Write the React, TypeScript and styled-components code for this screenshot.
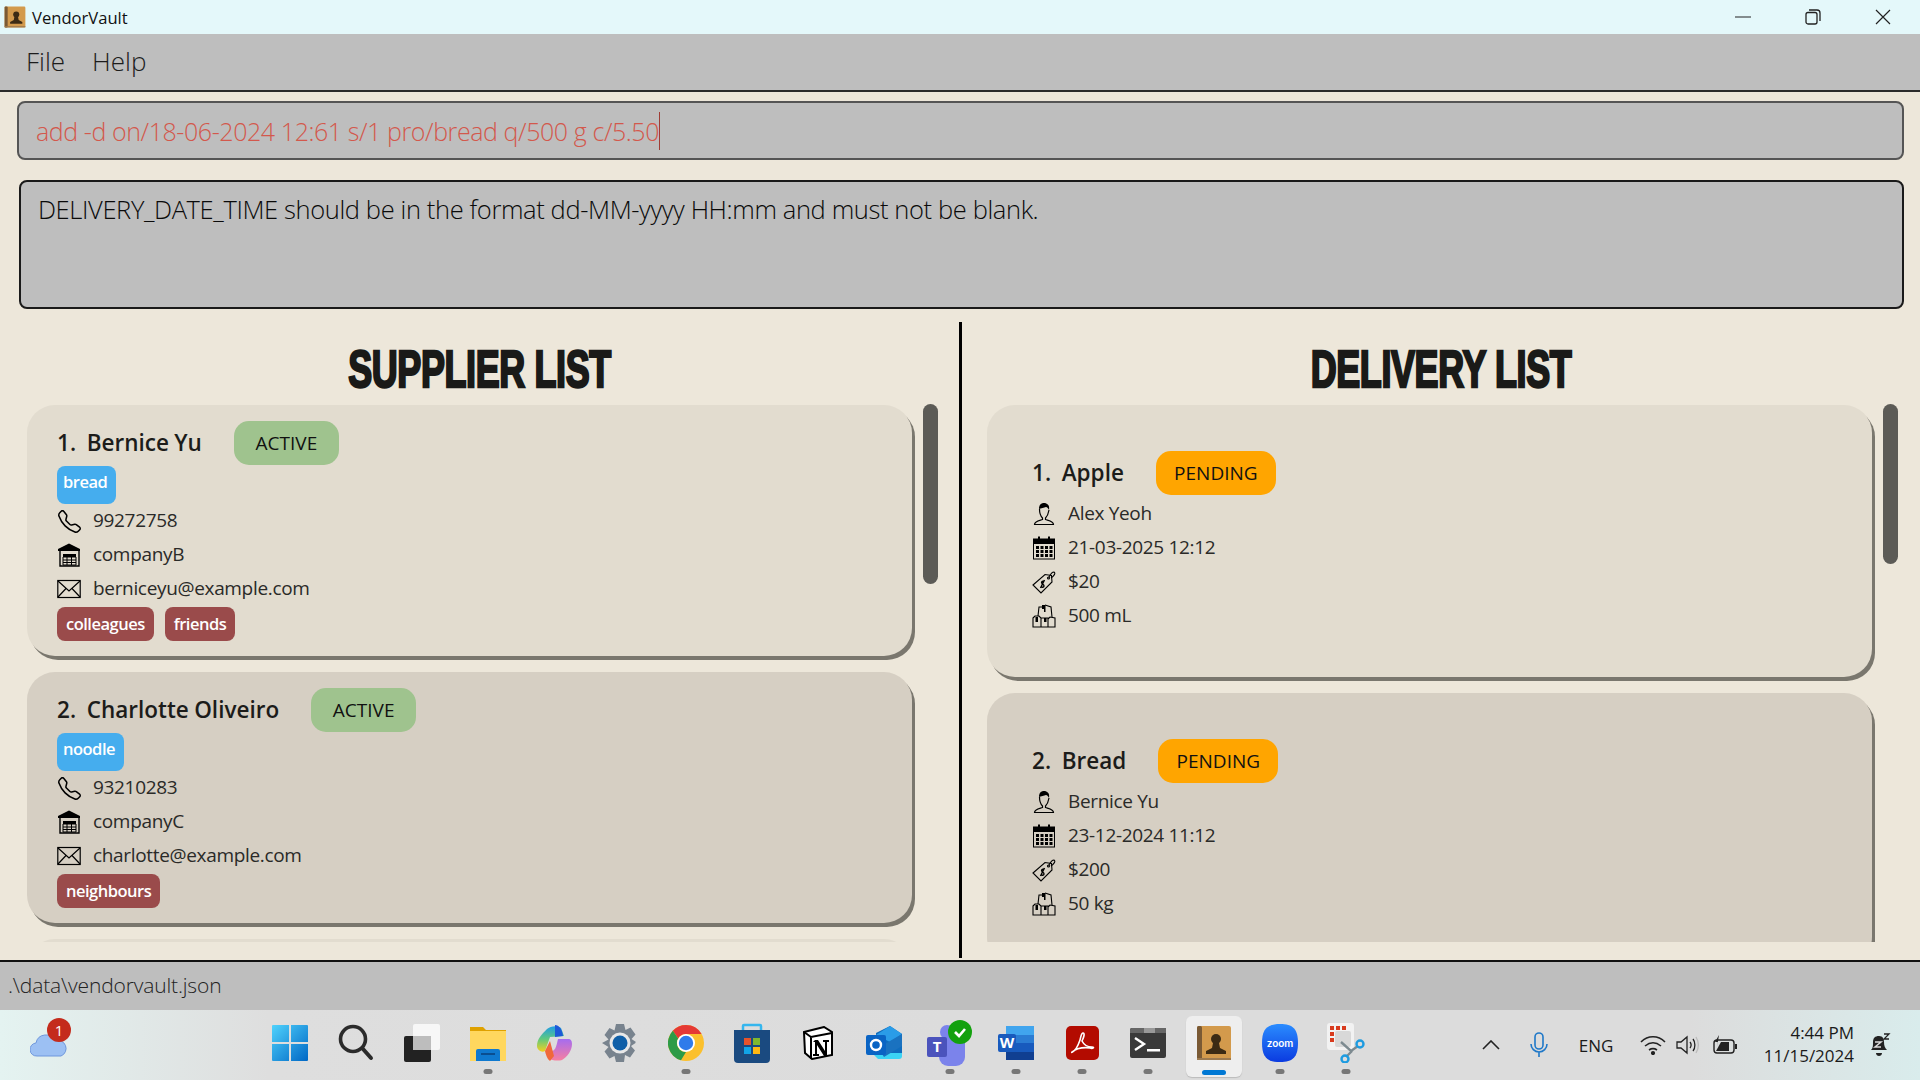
import React from "react";
import styled, { createGlobalStyle } from "styled-components";
import { BsTelephone } from "react-icons/bs";

const GlobalStyle = createGlobalStyle`
  html, body { margin: 0; padding: 0; }
  body { font-family: "Open Sans", "Noto Sans", sans-serif; background: #ede7da; overflow: hidden; }
  * { box-sizing: border-box; }
  svg { flex-shrink: 0; }
`;

const Page = styled.div`
  width: 1920px;
  height: 1080px;
  display: flex;
  flex-direction: column;
  overflow: hidden;
  background: #ede7da;
  color: #1c1c1a;
`;

const TitleBar = styled.div`
  height: 34px;
  flex: none;
  display: flex;
  align-items: center;
  background: #e4f8fa;
  padding-left: 4px;
  font-size: 16.6px;
  color: #111;
`;

const AppName = styled.span`
  margin-left: 6px;
  flex: 1;
`;

const WindowButton = styled.div`
  width: 70px;
  height: 34px;
  display: flex;
  align-items: center;
  justify-content: center;
  &:last-child { margin-right: 2px; }
`;

const MenuBar = styled.div`
  height: 58px;
  flex: none;
  display: flex;
  align-items: center;
  gap: 27px;
  padding: 0 0 2px 26px;
  background: #bebebe;
  border-bottom: 2px solid #2b2b2b;
  font-size: 26px;
  font-weight: 300;
  color: #1c1c1c;
`;

const CommandBox = styled.div`
  height: 59px;
  flex: none;
  margin: 9px 16px 0 17px;
  padding-left: 17px;
  display: flex;
  align-items: center;
  background: #bebebe;
  border: 2px solid #555;
  border-radius: 8px;
  font-size: 25px;
  font-weight: 300;
  letter-spacing: -0.42px;
  color: #d3584c;
  white-space: pre;
`;

const Caret = styled.span`
  width: 1px;
  height: 38px;
  background: #a03c34;
`;

const ResultBox = styled.div`
  height: 129px;
  flex: none;
  margin: 20px 16px 0 19px;
  padding: 10px 17px;
  background: #bebebe;
  border: 2px solid #1a1a1a;
  border-radius: 8px;
  font-size: 25.5px;
  font-weight: 300;
  letter-spacing: -0.38px;
  color: #0a0a0a;
`;

const Panels = styled.div`
  height: 636px;
  flex: none;
  margin-top: 13px;
  display: flex;
`;

const Panel = styled.section<{ $left?: boolean }>`
  width: ${({ $left }) => ($left ? "959px" : "958px")};
  flex: none;
  position: relative;
  padding-left: ${({ $left }) => ($left ? "27px" : "25px")};
`;

const Divider = styled.div`
  width: 3px;
  flex: none;
  background: #000;
`;

const PanelTitle = styled.h2<{ $inset: number }>`
  height: 81px;
  margin: 0 0 0 -${({ $inset }) => $inset}px;
  display: flex;
  align-items: center;
  justify-content: center;
  font-family: "Liberation Sans", sans-serif;
  font-size: 52px;
  font-weight: 700;
  -webkit-text-stroke: 2.5px #1a1a18;
  color: #1a1a18;
  letter-spacing: -0.5px;
  padding-top: 12px;
  transform: scaleX(0.69);
`;

const List = styled.div`
  height: 539px;
  padding-top: 2px;
  overflow: hidden;
  display: flex;
  flex-direction: column;
  gap: 16px;
`;

const Card = styled.article<{ $odd?: boolean; $delivery?: boolean; $height: number }>`
  width: 885px;
  height: ${({ $height }) => $height}px;
  flex: none;
  padding: ${({ $delivery }) => ($delivery ? "46px 0 0 45px" : "16px 0 0 30px")};
  background: ${({ $odd }) => ($odd ? "#e2dccf" : "#d6cfc3")};
  border-radius: 28px;
  box-shadow: 3px 4px 0 #7a776e;
`;

const NameRow = styled.div<{ $delivery?: boolean }>`
  height: 44px;
  display: flex;
  align-items: center;
  gap: 32px;
  margin-bottom: ${({ $delivery }) => ($delivery ? "2px" : "1px")};
`;

const Name = styled.span`
  font-size: 22.5px;
  font-weight: 600;
  word-spacing: -0.5px;
  color: #1c1c1a;
  white-space: pre;
  padding-bottom: 2px;
`;

const StatusPill = styled.span<{ $colour: string; $width: number }>`
  width: ${({ $width }) => $width}px;
  height: 44px;
  display: flex;
  align-items: center;
  justify-content: center;
  background: ${({ $colour }) => $colour};
  border-radius: 15px;
  font-size: 19px;
  color: #111;
`;

const TagRow = styled.div`
  display: flex;
  gap: 11px;
`;

const ProductTag = styled.span`
  height: 38px;
  padding: 2px 9px 0 6px;
  background: #45adee;
  border-radius: 8px;
  color: #fff;
  font-size: 16.5px;
  font-weight: 600;
  letter-spacing: -0.5px;
  line-height: 28px;
`;

const PersonTag = styled.span`
  height: 34px;
  padding: 0 9px;
  margin-top: 1px;
  background: #9a4b4b;
  border-radius: 8px;
  color: #fff;
  font-size: 16.5px;
  font-weight: 600;
  letter-spacing: -0.5px;
  line-height: 33px;
`;

const InfoRow = styled.div`
  height: 34px;
  display: flex;
  align-items: center;
  gap: 12px;
  font-size: 19px;
  letter-spacing: -0.33px;
  color: #2a2a28;
  padding-bottom: 2px;
`;

const RowIcon = styled.span`
  width: 24px;
  height: 24px;
  flex: none;
  display: flex;
  align-items: center;
  justify-content: center;
  color: #000;
  margin-top: 2px;
`;

const ScrollThumb = styled.div<{ $left: number; $height: number }>`
  position: absolute;
  top: 82px;
  left: ${({ $left }) => $left}px;
  width: 15px;
  height: ${({ $height }) => $height}px;
  border-radius: 8px;
  background: #5c5b56;
`;

const StatusBar = styled.div`
  height: 50px;
  flex: none;
  margin-top: 2px;
  padding: 0 0 3px 8px;
  display: flex;
  align-items: center;
  background: #bebebe;
  border-top: 2px solid #111;
  font-size: 21px;
  letter-spacing: -0.15px;
  font-weight: 300;
  color: #222;
`;

const Taskbar = styled.footer`
  height: 70px;
  flex: none;
  position: relative;
  display: flex;
  align-items: center;
  background: linear-gradient(90deg, #e4f3f1 0%, #dedede 14%, #dcdcdc 50%, #dcdcdc 88%, #d9ecec 100%);
  color: #1a1a1a;
`;

const Weather = styled.div`
  width: 257px;
  flex: none;
  position: relative;
  height: 70px;
  padding: 16px 0 0 30px;
`;

const Badge = styled.span`
  position: absolute;
  left: 47px;
  top: 8px;
  width: 24px;
  height: 24px;
  border-radius: 50%;
  background: #c42b1c;
  color: #fff;
  font-size: 15px;
  text-align: center;
  line-height: 24px;
`;

const TaskItem = styled.div<{ $running?: boolean; $active?: boolean }>`
  width: 66px;
  height: 70px;
  flex: none;
  position: relative;
  display: flex;
  align-items: center;
  justify-content: center;
  padding-bottom: 4px;
  &::before {
    content: "";
    display: ${({ $active }) => ($active ? "block" : "none")};
    position: absolute;
    left: 5px;
    right: 5px;
    top: 6px;
    bottom: 3px;
    background: #eeeeee;
    border-radius: 6px;
    box-shadow: 0 1px 1px #bbb;
  }
  &::after {
    content: "";
    display: ${({ $running, $active }) => ($running || $active ? "block" : "none")};
    position: absolute;
    left: 50%;
    transform: translateX(-50%);
    bottom: ${({ $active }) => ($active ? "5px" : "6px")};
    width: ${({ $active }) => ($active ? "24px" : "9px")};
    height: 5px;
    border-radius: 3px;
    background: ${({ $active }) => ($active ? "#0078d4" : "#777")};
  }
  svg { position: relative; }
`;

const Tray = styled.div`
  position: absolute;
  right: 0;
  top: 0;
  height: 70px;
  width: 460px;
  display: flex;
  align-items: center;
`;

const TrayIcon = styled.span<{ $width: number }>`
  width: ${({ $width }) => $width}px;
  flex: none;
  display: flex;
  align-items: center;
  justify-content: center;
  font-size: 17px;
`;

const Clock = styled.div`
  width: 110px;
  flex: none;
  text-align: right;
  font-size: 17px;
  line-height: 23px;
  white-space: nowrap;
  padding-bottom: 2px;
`;

const Telephone = () => <BsTelephone size={23} />;

const Warehouse = () => (
  <svg width="24" height="24" viewBox="0 0 24 24">
    <path d="M12 0.5L1 6v2h22V6z" fill="#000" />
    <path d="M3 8v15h19V8" fill="none" stroke="#000" strokeWidth="1.4" />
    <path d="M6 11h13v3H6z" fill="#000" />
    <path d="M6 14h13v8H6z" fill="none" stroke="#000" />
    <path d="M6 17h13M6 19.5h13M10 14v8M14.5 14v8" stroke="#000" strokeWidth="1" />
  </svg>
);

const Envelope = () => (
  <svg width="24" height="24" viewBox="0 0 24 24" fill="none" stroke="#000" strokeWidth="1.2">
    <rect x="0.8" y="3.5" width="22.4" height="17" />
    <path d="M1 4l11 10L23 4M1 20l8-8.5M23 20l-8-8.5" />
  </svg>
);

const Person = () => (
  <svg width="24" height="24" viewBox="0 0 24 24">
    <path d="M7 7c0-4 2-6 5-6s6 2 5 7c-1-2-2-3-3-3-2 1-5 1-7 2z" fill="#000" />
    <path d="M7.5 7c0 4 1 7 3 9v1.5c-3 1-8 1.500-8 5h19c0-3.500-5-4-8-5V16c2-2 3-5 3.500-8" fill="none" stroke="#000" strokeWidth="1.2" />
  </svg>
);

const Calendar = () => (
  <svg width="24" height="24" viewBox="0 0 24 24">
    <path d="M1 3h22v5H1z" fill="#000" />
    <path d="M6 0.500h2v4H6zM16 0.500h2v4h-2z" fill="#000" />
    <rect x="1.500" y="3" width="21" height="20" fill="none" stroke="#000" />
    {[10, 14, 18].map(y =>
      [4, 8.5, 13, 17.5].map(x => <rect key={`${x}-${y}`} x={x} y={y} width="3" height="3" fill="#000" />)
    )}
  </svg>
);

const PriceTag = () => (
  <svg width="24" height="24" viewBox="0 0 24 24" fill="none" stroke="#000" strokeWidth="1.1">
    <path d="M1 15L13 4.500l6.500 1 .5 6.500L9 23z" />
    <circle cx="16.500" cy="8" r="1" />
    <path d="M17 7c1-2 3-5 5-5 2 1 0 4-3 6" />
    <path d="M12 11.500c-2-1-3 1-2 2s2 1 2 2.500-2 1.500-3 .5M12.500 10l-4 8" strokeWidth="1.400" />
  </svg>
);

const Boxes = () => (
  <svg width="24" height="24" viewBox="0 0 24 24" fill="none" stroke="#000" strokeWidth="1.1">
    <path d="M6 12l1-9h4M13 1l6 2 1 10" />
    <path d="M1 14l2-2h4l2 2v9H1zM9 14h7v9H9zM16 15l2-2 5 1v9h-7" />
    <path d="M10 1h3.500v7H12v-3h-2zM3.500 13H6v5H3.500zM12 14h2.500v4H12z" fill="#000" stroke="none" />
  </svg>
);

const VaultIcon = ({ size }: { size: number }) => (
  <svg width={size} height={size} viewBox="0 0 36 36">
    <rect x="1" y="1" width="34" height="34" rx="2" fill="#d39a4c" />
    <rect x="1" y="1" width="5" height="34" rx="1.500" fill="#7a5a35" />
    <rect x="1" y="33" width="34" height="2" fill="#9c7a50" />
    <circle cx="20" cy="14" r="5" fill="#3c2b14" />
    <path d="M17 18h6l1 5 6 3v3H10v-3l6-3z" fill="#3c2b14" />
  </svg>
);

const StartIcon = () => (
  <svg width="36" height="36" viewBox="0 0 36 36">
    <defs>
      <linearGradient id="st" x1="0" y1="0" x2="1" y2="1">
        <stop offset="0" stopColor="#4fd2fc" />
        <stop offset="1" stopColor="#0067c5" />
      </linearGradient>
    </defs>
    <path d="M0 1a1 1 0 0 1 1-1h16v17H0zM19 0h16a1 1 0 0 1 1 1v16H19zM0 19h17v17H1a1 1 0 0 1-1-1zM19 19h17v16a1 1 0 0 1-1 1H19z" fill="url(#st)" />
  </svg>
);

const SearchIcon = () => (
  <svg width="36" height="38" viewBox="0 0 36 38" fill="none" stroke="#2b2b2b" strokeLinecap="round">
    <circle cx="15" cy="15" r="12.500" strokeWidth="3.600" />
    <path d="M25 25l8 9" strokeWidth="4" />
  </svg>
);

const TaskViewIcon = () => (
  <svg width="36" height="38" viewBox="0 0 36 38">
    <rect x="0" y="12" width="27" height="26" rx="2" fill="#222" />
    <rect x="9" y="0" width="27" height="26" rx="2" fill="#fafafa" opacity="0.9" />
    <rect x="9" y="12" width="18" height="14" fill="#bdbdbd" />
  </svg>
);

const FolderIcon = () => (
  <svg width="36" height="36" viewBox="0 0 36 36">
    <path d="M0 2h13l3 3h20v3H0z" fill="#dfa100" />
    <path d="M0 6h36v30H0z" fill="#ffd75e" />
    <path d="M6 26a2 2 0 0 1 2-2h20a2 2 0 0 1 2 2v10H6z" fill="#0f79cf" />
    <rect x="11" y="28" width="14" height="2" fill="#0a4e90" />
  </svg>
);

const CopilotIcon = () => (
  <svg width="36" height="36" viewBox="0 0 36 36">
    <defs>
      <linearGradient id="cp1" x1="0" y1="0" x2="0" y2="1">
        <stop offset="0" stopColor="#1f9ce6" />
        <stop offset="0.5" stopColor="#5fc97e" />
        <stop offset="1" stopColor="#f3d01f" />
      </linearGradient>
      <linearGradient id="cp2" x1="0" y1="0" x2="0" y2="1">
        <stop offset="0" stopColor="#a56cf0" />
        <stop offset="1" stopColor="#f77fa0" />
      </linearGradient>
    </defs>
    <path d="M11 4c3-3 11-4 14-1l3 8-14 1-5 14c-3 2-8-1-8-5 0-7 5-12 10-17z" fill="url(#cp1)" />
    <path d="M22 14h10c3 0 4 2 4 5 0 7-5 13-10 16-3 1-10 1-14-2l3-7c4 0 5-3 7-12z" fill="url(#cp2)" />
    <path d="M9 26l5-10 4 15 -4 5c-3-2-4-6-5-10z" fill="#f0683a" />
    <path d="M19 0c4 0 7 4 8 11l-8 1z" fill="#1d59d8" />
  </svg>
);

const SettingsIcon = () => (
  <svg width="36" height="38" viewBox="0 0 36 38">
    <path d="M14 0h8l1.500 6 5-2.500 5 7-4 4.500 4.500 3-.5 0 0 1-4.500 3 4 4.500-5 7-5-2.500L22 38h-8l-1.500-6-5 2.500-5-7 4-4.500L0 19l6.500-3.500-4-4.500 5-7 5 2.500z" fill="#78838e" />
    <circle cx="18" cy="19" r="10.500" fill="#e8e8e8" />
    <circle cx="18" cy="19" r="7.500" fill="#0f5fa8" />
  </svg>
);

const ChromeIcon = () => (
  <svg width="36" height="40" viewBox="0 0 36 36">
    <circle cx="18" cy="18" r="18" fill="#fbc02d" />
    <path d="M18 0A18 18 0 0 1 33.600 9H18A9 9 0 0 0 10.200 13.500L4.800 5.700A18 18 0 0 1 18 0Z" fill="#e53935" />
    <path d="M4.800 5.700L10.200 13.500A9 9 0 0 0 18 27L13 35.300A18 18 0 0 1 4.800 5.700Z" fill="#2e9b47" />
    <circle cx="18" cy="18" r="9" fill="#fff" />
    <circle cx="18" cy="18" r="7.200" fill="#2f7bea" />
  </svg>
);

const StoreIcon = () => (
  <svg width="36" height="40" viewBox="0 0 36 40">
    <path d="M9 8V3a1 1 0 0 1 1-1h16a1 1 0 0 1 1 1v5" fill="none" stroke="#35b6ee" strokeWidth="2.500" />
    <path d="M0 7h36v29a4 4 0 0 1-4 4H4a4 4 0 0 1-4-4z" fill="#1a4a80" />
    <path d="M10 15h7v7h-7z" fill="#e8532b" />
    <path d="M19 15h7v7h-7z" fill="#7fb82e" />
    <path d="M10 24h7v7h-7z" fill="#12a5e8" />
    <path d="M19 24h7v7h-7z" fill="#fdb813" />
  </svg>
);

const NotionIcon = () => (
  <svg width="30" height="34" viewBox="0 0 30 34">
    <path d="M1 6L21 1l8 5v23l-20 4-7-6z" fill="#fff" stroke="#000" strokeWidth="2" />
    <path d="M1 6l7 5 21-4M8 11v22" fill="none" stroke="#000" strokeWidth="2" />
    <path d="M12 14l3 0 7 11v-9h-2v-2h6v2h-2v14h-3l-7-11v9h2v2h-6v-2h2V16h-2z" fill="#000" />
  </svg>
);

const OutlookIcon = () => (
  <svg width="36" height="36" viewBox="0 0 36 36">
    <path d="M10 8l14-7 12 8v20a3 3 0 0 1-3 3H10z" fill="#0f6cbd" />
    <path d="M24 1l12 8-12 8-14-7z" fill="#2a9ce8" />
    <path d="M6 28h30v3a3 3 0 0 1-3 3H12z" fill="#3bd4f5" />
    <path d="M12 23l24-14v12L18 32z" fill="#1a72c0" />
    <rect x="0" y="10" width="20" height="20" rx="2" fill="#0a64c4" />
    <circle cx="10" cy="20" r="5" fill="none" stroke="#fff" strokeWidth="2.400" />
  </svg>
);

const TeamsIcon = () => (
  <svg width="46" height="46" viewBox="0 0 46 46">
    <circle cx="20" cy="12" r="7" fill="#7b83eb" />
    <rect x="12" y="14" width="26" height="32" rx="9" fill="#7b83eb" />
    <rect x="0" y="17" width="20" height="20" rx="2" fill="#4b53bc" />
    <text x="10" y="32" textAnchor="middle" fontSize="15" fontWeight="700" fill="#fff" fontFamily="Open Sans">T</text>
    <circle cx="33" cy="12" r="12" fill="#13a10e" />
    <path d="M28 12l4 4 6-7" fill="none" stroke="#fff" strokeWidth="2.600" />
  </svg>
);

const WordIcon = () => (
  <svg width="36" height="36" viewBox="0 0 36 36">
    <rect x="8" y="1" width="28" height="34" rx="2" fill="#2b7cd3" />
    <rect x="8" y="1" width="28" height="9" fill="#41a5ee" />
    <rect x="8" y="18" width="28" height="9" fill="#185abd" />
    <rect x="8" y="27" width="28" height="8" fill="#103f91" />
    <rect x="0" y="9" width="18" height="18" rx="2" fill="#185abd" />
    <text x="9" y="23" textAnchor="middle" fontSize="15" fontWeight="700" fill="#fff" fontFamily="Open Sans">W</text>
  </svg>
);

const AcrobatIcon = () => (
  <svg width="33" height="34" viewBox="0 0 33 34">
    <rect x="0" y="0" width="33" height="34" rx="5" fill="#b30b00" />
    <path d="M6 26c3-1 6-6 8-12 1-3 1-7 3-7s1 4-1 8c2 4 5 6 10 6 3 0 1 2-2 1-5-1-12 0-15 2-2 2-4 3-3 2z" fill="none" stroke="#fff" strokeWidth="1.600" />
  </svg>
);

const TerminalIcon = () => (
  <svg width="36" height="30" viewBox="0 0 36 30">
    <rect x="0" y="0" width="36" height="30" rx="2" fill="#3a3a3a" />
    <path d="M0 2a2 2 0 0 1 2-2h12v5H0z" fill="#666" />
    <rect x="14" y="0" width="11" height="5" fill="#999" />
    <rect x="25" y="0" width="11" height="5" fill="#666" />
    <path d="M5 10l9 6-9 6" fill="none" stroke="#fff" strokeWidth="2.400" />
    <rect x="17" y="21" width="13" height="2.500" fill="#fff" />
  </svg>
);

const ZoomIcon = () => (
  <svg width="36" height="38" viewBox="0 0 36 38">
    <defs>
      <linearGradient id="zm" x1="0" y1="0" x2="0" y2="1">
        <stop offset="0" stopColor="#2a8cff" />
        <stop offset="1" stopColor="#0b3be0" />
      </linearGradient>
    </defs>
    <path d="M18 0c13 0 18 5 18 19s-5 19-18 19S0 33 0 19 5 0 18 0z" fill="url(#zm)" />
    <text x="18" y="23" textAnchor="middle" fontSize="10" fontWeight="600" fill="#fff" fontFamily="Inter">zoom</text>
  </svg>
);

const SnipIcon = () => (
  <svg width="38" height="40" viewBox="0 0 38 40">
    <rect x="0" y="0" width="27" height="27" rx="3" fill="#f2f2f2" />
    <path d="M3 3h4v4H3zM9 3h4v4H9zM15 3h4v4h-4zM3 9h4v4H3zM3 15h4v4H3z" fill="#d83b1e" />
    <rect x="8" y="8" width="16" height="16" rx="2" fill="#d8d8d8" />
    <path d="M14 19l10 9 7-5M25 28l-6 6" fill="none" stroke="#7d8a90" strokeWidth="2.400" />
    <circle cx="33" cy="21" r="3.500" fill="none" stroke="#1d9be0" strokeWidth="2.400" />
    <circle cx="18" cy="36" r="3.500" fill="none" stroke="#1d9be0" strokeWidth="2.400" />
  </svg>
);

const CloudIcon = () => (
  <svg width="38" height="32" viewBox="0 0 38 32">
    <circle cx="28" cy="10" r="7" fill="#e8861a" />
    <path d="M7 30a6.500 6.500 0 0 1-1-13 10 10 0 0 1 19-2 8 8 0 0 1 6 15z" fill="#9cc0f3" stroke="#6f97dc" strokeWidth="1" />
  </svg>
);

const suppliers = [
  { no: 1, name: "Bernice Yu", status: "ACTIVE", product: "bread", phone: "99272758", company: "companyB", email: "berniceyu@example.com", tags: ["colleagues", "friends"] },
  { no: 2, name: "Charlotte Oliveiro", status: "ACTIVE", product: "noodle", phone: "93210283", company: "companyC", email: "charlotte@example.com", tags: ["neighbours"] },
];

const deliveries = [
  { no: 1, product: "Apple", person: "Alex Yeoh", date: "21-03-2025 12:12", cost: "$20", qty: "500 mL" },
  { no: 2, product: "Bread", person: "Bernice Yu", date: "23-12-2024 11:12", cost: "$200", qty: "50 kg" },
];

const taskApps = [
  { id: "start", icon: <StartIcon /> },
  { id: "search", icon: <SearchIcon /> },
  { id: "view", icon: <TaskViewIcon /> },
  { id: "files", icon: <FolderIcon />, running: true },
  { id: "copilot", icon: <CopilotIcon /> },
  { id: "settings", icon: <SettingsIcon /> },
  { id: "chrome", icon: <ChromeIcon />, running: true },
  { id: "store", icon: <StoreIcon /> },
  { id: "notion", icon: <NotionIcon /> },
  { id: "outlook", icon: <OutlookIcon /> },
  { id: "teams", icon: <TeamsIcon />, running: true },
  { id: "word", icon: <WordIcon />, running: true },
  { id: "acrobat", icon: <AcrobatIcon />, running: true },
  { id: "terminal", icon: <TerminalIcon />, running: true },
  { id: "vault", icon: <VaultIcon size={36} />, active: true },
  { id: "zoom", icon: <ZoomIcon />, running: true },
  { id: "snip", icon: <SnipIcon />, running: true },
];

export default function App() {
  return (
    <Page>
      <GlobalStyle />
      <TitleBar>
        <VaultIcon size={22} />
        <AppName>VendorVault</AppName>
        <WindowButton>
          <svg width="16" height="2" viewBox="0 0 16 2"><path d="M0 1h16" stroke="#222" strokeWidth="1" /></svg>
        </WindowButton>
        <WindowButton>
          <svg width="16" height="16" viewBox="0 0 16 16" fill="none" stroke="#222" strokeWidth="1.300">
            <rect x="1" y="3.500" width="11" height="11.500" rx="2" />
            <path d="M4 1h8a3 3 0 0 1 3 3v8" />
          </svg>
        </WindowButton>
        <WindowButton>
          <svg width="16" height="16" viewBox="0 0 16 16"><path d="M1 1l14 14M15 1L1 15" stroke="#222" strokeWidth="1.200" /></svg>
        </WindowButton>
      </TitleBar>
      <MenuBar>
        <span>File</span>
        <span>Help</span>
      </MenuBar>
      <CommandBox>
        add -d on/18-06-2024 12:61 s/1 pro/bread q/500 g c/5.50
        <Caret />
      </CommandBox>
      <ResultBox>DELIVERY_DATE_TIME should be in the format dd-MM-yyyy HH:mm and must not be blank.</ResultBox>
      <Panels>
        <Panel $left>
          <PanelTitle $inset={27}>SUPPLIER LIST</PanelTitle>
          <List>
            {suppliers.map(s => (
              <Card key={s.no} $height={251} $odd={s.no % 2 === 1}>
                <NameRow>
                  <Name>{s.no}.  {s.name}</Name>
                  <StatusPill $colour="#9fc38e" $width={105}>{s.status}</StatusPill>
                </NameRow>
                <TagRow><ProductTag>{s.product}</ProductTag></TagRow>
                <InfoRow><RowIcon><Telephone /></RowIcon>{s.phone}</InfoRow>
                <InfoRow><RowIcon><Warehouse /></RowIcon>{s.company}</InfoRow>
                <InfoRow><RowIcon><Envelope /></RowIcon>{s.email}</InfoRow>
                <TagRow>{s.tags.map(t => <PersonTag key={t}>{t}</PersonTag>)}</TagRow>
              </Card>
            ))}
            <Card $height={251} $odd />
          </List>
          <ScrollThumb $left={923} $height={180} />
        </Panel>
        <Divider />
        <Panel>
          <PanelTitle $inset={25}>DELIVERY LIST</PanelTitle>
          <List>
            {deliveries.map(d => (
              <Card key={d.no} $delivery $height={272} $odd={d.no % 2 === 1}>
                <NameRow $delivery>
                  <Name>{d.no}.  {d.product}</Name>
                  <StatusPill $colour="#ffa500" $width={120}>PENDING</StatusPill>
                </NameRow>
                <InfoRow><RowIcon><Person /></RowIcon>{d.person}</InfoRow>
                <InfoRow><RowIcon><Calendar /></RowIcon>{d.date}</InfoRow>
                <InfoRow><RowIcon><PriceTag /></RowIcon>{d.cost}</InfoRow>
                <InfoRow><RowIcon><Boxes /></RowIcon>{d.qty}</InfoRow>
              </Card>
            ))}
          </List>
          <ScrollThumb $left={921} $height={160} />
        </Panel>
      </Panels>
      <StatusBar>.\data\vendorvault.json</StatusBar>
      <Taskbar>
        <Weather>
          <CloudIcon />
          <Badge>1</Badge>
        </Weather>
        {taskApps.map(a => (
          <TaskItem key={a.id} $running={a.running} $active={a.active}>{a.icon}</TaskItem>
        ))}
        <Tray>
          <TrayIcon $width={62}>
            <svg width="18" height="10" viewBox="0 0 18 10" fill="none" stroke="#222" strokeWidth="1.600"><path d="M1 9l8-8 8 8" /></svg>
          </TrayIcon>
          <TrayIcon $width={34}>
            <svg width="18" height="26" viewBox="0 0 18 26" fill="none" stroke="#1f78c8" strokeWidth="1.600">
              <rect x="5" y="1" width="8" height="16" rx="4" />
              <path d="M1 12a8 8 0 0 0 16 0M9 20v5" />
            </svg>
          </TrayIcon>
          <TrayIcon $width={80}>ENG</TrayIcon>
          <TrayIcon $width={34}>
            <svg width="26" height="20" viewBox="0 0 26 20" fill="none" stroke="#222" strokeWidth="1.600">
              <path d="M1 7c7-7 17-7 24 0M5 11c5-4 11-4 16 0M9 15c3-2 5-2 8 0" />
              <circle cx="13" cy="18" r="1.300" fill="#222" />
            </svg>
          </TrayIcon>
          <TrayIcon $width={36}>
            <svg width="24" height="20" viewBox="0 0 24 20" fill="none" stroke="#222" strokeWidth="1.300">
              <path d="M1 7h4l6-5v16l-6-5H1zM14 7c1.500 2 1.500 4 0 6M17 4c2.500 3 2.500 9 0 12" />
              <path d="M20 2c3 5 3 11 0 16" stroke="#bbb" />
            </svg>
          </TrayIcon>
          <TrayIcon $width={38}>
            <svg width="24" height="20" viewBox="0 0 24 20">
              <rect x="1" y="5" width="20" height="13" rx="3" fill="none" stroke="#222" strokeWidth="1.400" />
              <path d="M3 16l5-9h8v9z" fill="#222" />
              <path d="M22 9h2v5h-2zM6 0L2 7h3l-1 5" fill="#222" />
            </svg>
          </TrayIcon>
          <Clock>4:44 PM<br />11/15/2024</Clock>
          <TrayIcon $width={52}>
            <svg width="22" height="24" viewBox="0 0 22 24">
              <path d="M2 17c2-2 2-4 2-8 0-4 2-6 6-6s5 3 5 6c0 4 1 6 3 8z" fill="#222" />
              <path d="M7 20h6c0 2-1.500 3-3 3s-3-1-3-3z" fill="#222" />
              <path d="M15 1h5l-5 5h5" fill="none" stroke="#222" strokeWidth="1.300" />
              <path d="M6 9h6l-6 5h6" fill="none" stroke="#ddd" strokeWidth="1.500" />
            </svg>
          </TrayIcon>
        </Tray>
      </Taskbar>
    </Page>
  );
}
